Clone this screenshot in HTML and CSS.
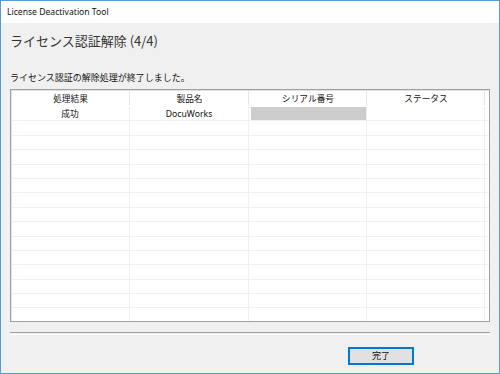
FILE: index.html
```html
<!DOCTYPE html>
<html lang="ja">
<head>
<meta charset="utf-8">
<title>License Deactivation Tool</title>
<link rel="stylesheet" href="styles.css">
</head>
<body>
<div class="window">
  <div class="titlebar">License Deactivation Tool</div>
  <div class="content">
    <h1 class="heading">ライセンス認証解除 (4/4)</h1>
    <p class="message">ライセンス認証の解除処理が終了しました。</p>
    <div class="list">
      <div class="row head">
        <div class="cell">処理結果</div>
        <div class="cell">製品名</div>
        <div class="cell">シリアル番号</div>
        <div class="cell">ステータス</div>
        <div class="cell filler"></div>
      </div>
      <div class="row">
        <div class="cell">成功</div>
        <div class="cell">DocuWorks</div>
        <div class="cell"><span class="masked"></span></div>
        <div class="cell"></div>
        <div class="cell filler"></div>
      </div>
      <div class="row"><div class="cell"></div><div class="cell"></div><div class="cell"></div><div class="cell"></div><div class="cell filler"></div></div>
      <div class="row"><div class="cell"></div><div class="cell"></div><div class="cell"></div><div class="cell"></div><div class="cell filler"></div></div>
      <div class="row"><div class="cell"></div><div class="cell"></div><div class="cell"></div><div class="cell"></div><div class="cell filler"></div></div>
      <div class="row"><div class="cell"></div><div class="cell"></div><div class="cell"></div><div class="cell"></div><div class="cell filler"></div></div>
      <div class="row"><div class="cell"></div><div class="cell"></div><div class="cell"></div><div class="cell"></div><div class="cell filler"></div></div>
      <div class="row"><div class="cell"></div><div class="cell"></div><div class="cell"></div><div class="cell"></div><div class="cell filler"></div></div>
      <div class="row"><div class="cell"></div><div class="cell"></div><div class="cell"></div><div class="cell"></div><div class="cell filler"></div></div>
      <div class="row"><div class="cell"></div><div class="cell"></div><div class="cell"></div><div class="cell"></div><div class="cell filler"></div></div>
      <div class="row"><div class="cell"></div><div class="cell"></div><div class="cell"></div><div class="cell"></div><div class="cell filler"></div></div>
      <div class="row"><div class="cell"></div><div class="cell"></div><div class="cell"></div><div class="cell"></div><div class="cell filler"></div></div>
      <div class="row"><div class="cell"></div><div class="cell"></div><div class="cell"></div><div class="cell"></div><div class="cell filler"></div></div>
      <div class="row"><div class="cell"></div><div class="cell"></div><div class="cell"></div><div class="cell"></div><div class="cell filler"></div></div>
      <div class="row"><div class="cell"></div><div class="cell"></div><div class="cell"></div><div class="cell"></div><div class="cell filler"></div></div>
      <div class="row"><div class="cell"></div><div class="cell"></div><div class="cell"></div><div class="cell"></div><div class="cell filler"></div></div>
    </div>
    <div class="separator"></div>
    <div class="actions">
      <button class="btn" type="button">完了</button>
    </div>
  </div>
</div>
</body>
</html>
```
FILE: styles.css
```css
html, body {
  margin: 0;
  padding: 0;
  background: #f0f0f0;
}
body {
  font-family: "Noto Sans", "Noto Sans CJK JP", sans-serif;
  color: #1a1a1a;
}
.window {
  box-sizing: border-box;
  width: 500px;
  height: 374px;
  border: 1px solid #5a9ad8;
  display: flex;
  flex-direction: column;
  background: #f0f0f0;
  overflow: hidden;
}
.titlebar {
  height: 22px;
  line-height: 22px;
  background: #ffffff;
  padding-left: 6px;
  font-size: 8.6px;
  color: #111;
}
.content {
  flex: 1;
  padding: 8px 9px 0 9px;
  display: flex;
  flex-direction: column;
}
.heading {
  margin: 0;
  font-family: "Noto Sans CJK JP", sans-serif;
  font-weight: normal;
  font-size: 13px;
  line-height: 20px;
  color: #333;
}
.message {
  margin: 20px 0 0 0;
  font-family: "Noto Sans CJK JP", sans-serif;
  font-size: 9px;
  line-height: 14px;
  color: #111;
}
.list {
  margin-top: 4px;
  box-sizing: border-box;
  width: 480px;
  height: 233px;
  border: 1px solid #a0a0a0;
  box-shadow: inset 1px 1px 0 #e0e0e0;
  background: #ffffff;
  overflow: hidden;
  display: flex;
  flex-direction: column;
}
.row {
  display: grid;
  grid-template-columns: 119px 119px 118px 118px 1fr;
  height: 14.4px;
  flex: none;
  border-bottom: 1px solid #f0f0f0;
  box-sizing: border-box;
}
.row.head {
  height: 17px;
  border-bottom: none;
}
.cell {
  border-right: 1px solid #f0f0f0;
  font-size: 8.7px;
  line-height: 14px;
  text-align: center;
  font-family: "Noto Sans", "Noto Sans CJK JP", sans-serif;
  color: #111;
  overflow: hidden;
  white-space: nowrap;
  position: relative;
}
.cell.filler {
  border-right: none;
}
.head .cell {
  border-right: none;
  line-height: 19px;
}
.head .cell::after {
  content: "";
  position: absolute;
  right: 0;
  top: 0;
  bottom: 2px;
  width: 1px;
  background: #e5e5e5;
}
.head .cell.filler::after {
  display: none;
}
.masked {
  display: block;
  margin-left: 2px;
  height: 100%;
  background: #cccccc;
}
.separator {
  margin-top: 10px;
  width: 480px;
  height: 1px;
  border-top: 1px solid #a0a0a0;
  border-bottom: 1px solid #ffffff;
}
.actions {
  display: flex;
  justify-content: flex-end;
  padding-right: 76px;
  margin-top: 12px;
}
.btn {
  box-sizing: border-box;
  width: 66px;
  height: 18px;
  border: 2px solid #0078d7;
  background: #e1e1e1;
  font-family: "Noto Sans CJK JP", sans-serif;
  font-size: 9px;
  line-height: 12px;
  padding: 0;
  color: #111;
}
```
